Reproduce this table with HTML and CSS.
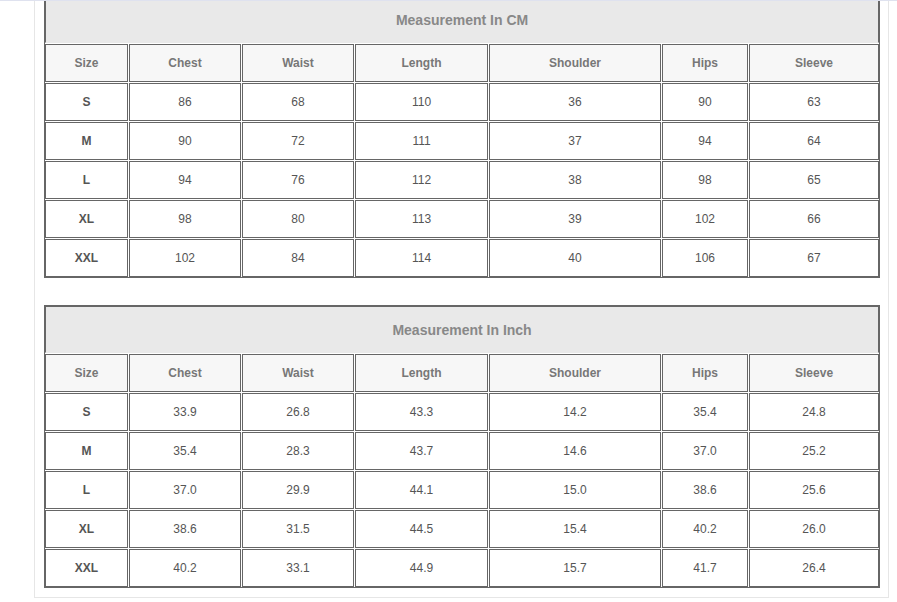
FILE: index.html
```html
<!DOCTYPE html>
<html>
<head>
<meta charset="utf-8">
<link rel="stylesheet" href="styles.css">
</head>
<body>
<div class="topline"></div>
<div class="panel">
  <table class="chart">
    <colgroup>
      <col class="c-size"><col class="c-chest"><col class="c-waist"><col class="c-length"><col class="c-shoulder"><col class="c-hips"><col class="c-sleeve">
    </colgroup>
    <tr><td class="title" colspan="7">Measurement In CM</td></tr>
    <tr class="head"><td>Size</td><td>Chest</td><td>Waist</td><td>Length</td><td>Shoulder</td><td>Hips</td><td>Sleeve</td></tr>
    <tr><td class="sz">S</td><td>86</td><td>68</td><td>110</td><td>36</td><td>90</td><td>63</td></tr>
    <tr><td class="sz">M</td><td>90</td><td>72</td><td>111</td><td>37</td><td>94</td><td>64</td></tr>
    <tr><td class="sz">L</td><td>94</td><td>76</td><td>112</td><td>38</td><td>98</td><td>65</td></tr>
    <tr><td class="sz">XL</td><td>98</td><td>80</td><td>113</td><td>39</td><td>102</td><td>66</td></tr>
    <tr><td class="sz">XXL</td><td>102</td><td>84</td><td>114</td><td>40</td><td>106</td><td>67</td></tr>
  </table>
  <table class="chart">
    <colgroup>
      <col class="c-size"><col class="c-chest"><col class="c-waist"><col class="c-length"><col class="c-shoulder"><col class="c-hips"><col class="c-sleeve">
    </colgroup>
    <tr><td class="title" colspan="7">Measurement In Inch</td></tr>
    <tr class="head"><td>Size</td><td>Chest</td><td>Waist</td><td>Length</td><td>Shoulder</td><td>Hips</td><td>Sleeve</td></tr>
    <tr><td class="sz">S</td><td>33.9</td><td>26.8</td><td>43.3</td><td>14.2</td><td>35.4</td><td>24.8</td></tr>
    <tr><td class="sz">M</td><td>35.4</td><td>28.3</td><td>43.7</td><td>14.6</td><td>37.0</td><td>25.2</td></tr>
    <tr><td class="sz">L</td><td>37.0</td><td>29.9</td><td>44.1</td><td>15.0</td><td>38.6</td><td>25.6</td></tr>
    <tr><td class="sz">XL</td><td>38.6</td><td>31.5</td><td>44.5</td><td>15.4</td><td>40.2</td><td>26.0</td></tr>
    <tr><td class="sz">XXL</td><td>40.2</td><td>33.1</td><td>44.9</td><td>15.7</td><td>41.7</td><td>26.4</td></tr>
  </table>
</div>
</body>
</html>
```
FILE: styles.css
```css
html, body {
  margin: 0;
  padding: 0;
  background: #fff;
  overflow: hidden;
}
body {
  font-family: "Liberation Sans", Arial, sans-serif;
}
.topline {
  position: fixed;
  top: 0;
  left: 0;
  right: 0;
  height: 1px;
  background: #dfe2ef;
  z-index: 5;
}
.panel {
  width: 836px;
  margin: -16px 0 0 34px;
  padding: 10px 8px 9px 9px;
  border: 1px solid #e6e6e6;
  display: flex;
  flex-direction: column;
  gap: 27px;
}
.chart {
  width: 836px;
  table-layout: fixed;
  border-collapse: separate;
  border-spacing: 1px;
  background: #fff;
  box-shadow: inset 0 0 0 1px #666;
}
.c-size { width: 83px; }
.c-chest { width: 112px; }
.c-waist { width: 112px; }
.c-length { width: 133px; }
.c-shoulder { width: 172px; }
.c-hips { width: 86px; }
.c-sleeve { width: 130px; }
.chart td {
  border: 1px solid #666;
  height: 38px;
  padding: 0;
  text-align: center;
  vertical-align: middle;
  font-size: 12px;
  color: #555;
  box-sizing: border-box;
}
.chart td.title {
  height: 47px;
  background: #e9e9e9;
  border-bottom-color: #e9e9e9;
  font-size: 14px;
  font-weight: bold;
  color: #888;
}
.chart tr.head td {
  background: #f7f7f7;
  font-weight: bold;
  color: #777;
}
.chart td.sz {
  font-weight: bold;
  color: #555;
}
```
